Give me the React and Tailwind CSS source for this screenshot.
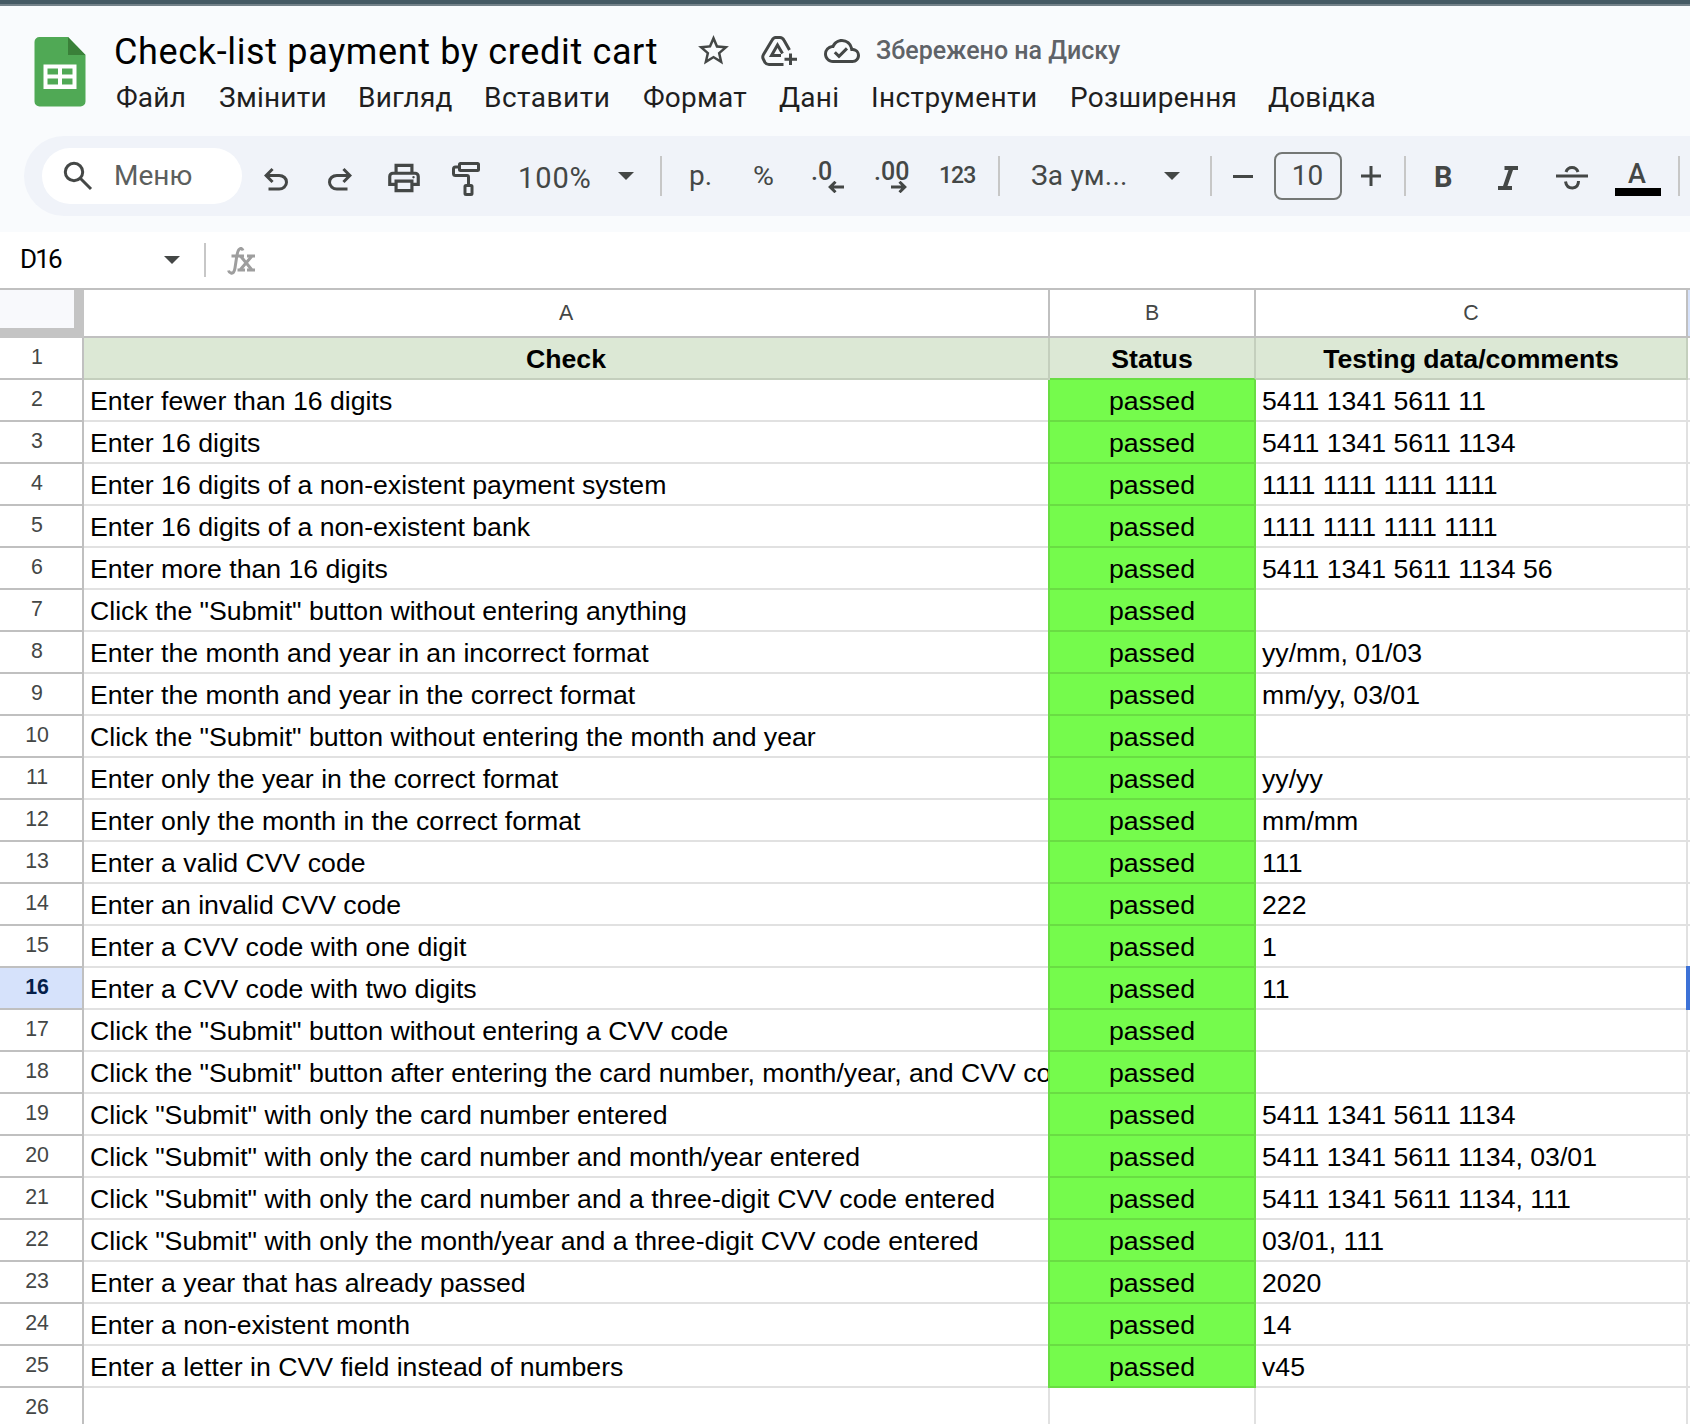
const T = ({ className = "", children }) => (
  <div className={"shrink-0 whitespace-nowrap " + className}>{children}</div>
);

const menus = [
  ["Файл", "w-[103px]"],
  ["Змінити", "w-[139px]"],
  ["Вигляд", "w-[126px]"],
  ["Вставити", "w-[159px] tracking-[0.5px]"],
  ["Формат", "w-[136px]"],
  ["Дані", "w-[92px]"],
  ["Інструменти", "w-[199px] tracking-[0.4px]"],
  ["Розширення", "w-[198px]"],
  ["Довідка", "w-[120px] tracking-[0.1px]"],
];

const rows = [
  ["Enter fewer than 16 digits", "5411 1341 5611 11"],
  ["Enter 16 digits", "5411 1341 5611 1134"],
  ["Enter 16 digits of a non-existent payment system", "1111 1111 1111 1111"],
  ["Enter 16 digits of a non-existent bank", "1111 1111 1111 1111"],
  ["Enter more than 16 digits", "5411 1341 5611 1134 56"],
  ['Click the "Submit" button without entering anything', ""],
  ["Enter the month and year in an incorrect format", "yy/mm, 01/03"],
  ["Enter the month and year in the correct format", "mm/yy, 03/01"],
  ['Click the "Submit" button without entering the month and year', ""],
  ["Enter only the year in the correct format", "yy/yy"],
  ["Enter only the month in the correct format", "mm/mm"],
  ["Enter a valid CVV code", "111"],
  ["Enter an invalid CVV code", "222"],
  ["Enter a CVV code with one digit", "1"],
  ["Enter a CVV code with two digits", "11"],
  ['Click the "Submit" button without entering a CVV code', ""],
  ['Click the "Submit" button after entering the card number, month/year, and CVV code', ""],
  ['Click "Submit" with only the card number entered', "5411 1341 5611 1134"],
  ['Click "Submit" with only the card number and month/year entered', "5411 1341 5611 1134, 03/01"],
  ['Click "Submit" with only the card number and a three-digit CVV code entered', "5411 1341 5611 1134, 111"],
  ['Click "Submit" with only the month/year and a three-digit CVV code entered', "03/01, 111"],
  ["Enter a year that has already passed", "2020"],
  ["Enter a non-existent month", "14"],
  ["Enter a letter in CVV field instead of numbers", "v45"],
];

const Caret = ({ className = "" }) => (
  <svg className={"shrink-0 " + className} width="16" height="8" viewBox="0 0 16 8" fill="#444746"><path d="M0 0h16L8 8z" /></svg>
);
const Divider = ({ className = "" }) => <div className={"h-10 w-0.5 shrink-0 bg-[#c7c7c7] " + className} />;

function Header() {
  return (
    <div className="flex h-[130px]">
      <svg className="mt-[31px] ml-[34px] shrink-0" width="52" height="70" viewBox="0 0 52 70">
        <path d="M5 0h29l17.500 18v46.500a5 5 0 0 1-5 5H5.500a5 5 0 0 1-5-5V5a5 5 0 0 1 5-5z" fill="#50a955" />
        <path d="M34 0l17.500 18H34z" fill="#3a8039" />
        <path fillRule="evenodd" d="M9.500 27.500h33v24.500h-33zM13.500 31.500v6h10.500v-6zM28 31.500v6h10.500v-6zM13.500 41.500v6h10.500v-6zM28 41.500v6h10.500v-6z" fill="#fff" />
      </svg>
      <div className="flex flex-col">
        <div className="flex h-[60px] pt-[21px]">
          <T className="mt-px ml-[28px] w-[581px] font-['Roboto'] text-[36px] leading-[48px] tracking-[0.65px] text-black">Check-list payment by credit cart</T>
          <svg className="mt-[5px] shrink-0" width="37" height="37" viewBox="0 0 24 24" fill="#444746">
            <path d="m22 9.240-7.190-.62L12 2 9.190 8.630 2 9.240l5.460 4.730L5.820 21 12 17.270 18.180 21l-1.630-7.030zM12 15.400l-3.760 2.270 1-4.280-3.320-2.880 4.380-.38L12 6.100l1.710 4.040 4.380.38-3.320 2.880 1 4.280z" />
          </svg>
          <svg className="mt-[9px] ml-[29px] shrink-0" width="36" height="30" viewBox="0 0 36 30" fill="none" stroke="#444746" strokeWidth="3">
            <path d="M28.500 14L23 4.300Q21.500 1.500 19 1.500H14.500Q12.500 1.500 11 4.300L2.500 18.500Q1 21 2.500 23.500L4 26.500Q5.300 28.500 8 28.500H22.500" />
            <path d="M20 19.500H10.500L16.500 9L21.500 17.500" /><path d="M29.500 17.500v11.500M23.500 23.200H36" />
          </svg>
          <svg className="mt-1.5 ml-[27px] shrink-0" width="36" height="36" viewBox="0 0 24 24" fill="#444746">
            <path d="M19.350 10.040A7.490 7.490 0 0 0 12 4C9.110 4 6.600 5.640 5.350 8.040A5.994 5.994 0 0 0 0 14c0 3.310 2.690 6 6 6h13c2.760 0 5-2.240 5-5 0-2.640-2.050-4.780-4.650-4.960zM19 18H6c-2.210 0-4-1.790-4-4 0-2.050 1.530-3.760 3.560-3.970l1.070-.11.500-.95A5.469 5.469 0 0 1 12 6c2.620 0 4.880 1.860 5.390 4.430l.3 1.500 1.530.11A2.980 2.980 0 0 1 22 15c0 1.650-1.350 3-3 3zm-9-3.820-2.090-2.090L6.500 13.500 10 17l6.010-6.010-1.410-1.410z" />
          </svg>
          <T className="ml-4 pt-1 font-['Roboto'] text-[25px] leading-10 font-medium text-[#5f6368]">Збережено на Диску</T>
        </div>
        <div className="ml-[30px] flex font-['Roboto'] text-[28px] leading-[64px] tracking-[0.25px] text-[#1f1f1f]">
          {menus.map(([m, w]) => <T key={m} className={w}>{m}</T>)}
        </div>
      </div>
    </div>
  );
}

const arrowPath = "M280-200v-80h284q63 0 109.500-40T720-420q0-60-46.500-100T564-560H312l104 104-56 56-200-200 200-200 56 56-104 104h252q97 0 169.500 63T800-420q0 94-72.500 157T564-200H280Z";

function Toolbar() {
  return (
    <div className="ml-6 flex h-20 items-center overflow-hidden rounded-l-full bg-[#f0f3f9] font-['Roboto'] text-[28px] leading-10 text-[#444746]">
      <div className="ml-[18px] flex h-14 w-[200px] shrink-0 items-center rounded-full bg-white">
        <svg className="ml-[21px] shrink-0" width="30" height="30" viewBox="0 0 30 30" fill="none" stroke="#444746" strokeWidth="3"><circle cx="11" cy="11" r="8.700" /><path d="M17.500 17.500L28 28" /></svg>
        <T className="ml-[21px] text-[#5c5f5e]">Меню</T>
      </div>
      <svg className="mt-2 ml-4 shrink-0" width="36" height="36" viewBox="0 -960 960 960" fill="#444746"><path d={arrowPath} /></svg>
      <svg className="mt-2 ml-7 shrink-0 -scale-x-100" width="36" height="36" viewBox="0 -960 960 960" fill="#444746"><path d={arrowPath} /></svg>
      <svg className="mt-1 ml-[27px] shrink-0" width="38" height="38" viewBox="0 -960 960 960" fill="#444746"><path d="M640-640v-120H320v120h-80v-200h480v200h-80Zm80 170q13 0 21.500-8.500T750-500q0-13-8.500-21.500T720-530q-13 0-21.500 8.500T690-500q0 13 8.500 21.500T720-470Zm-80 270v-160H320v160h320Zm80 80H240v-160H80v-240q0-51 35-85.500t85-34.500h560q51 0 85.500 34.500T880-520v240H720v160Zm80-240v-160q0-17-11.500-28.500T760-560H200q-17 0-28.500 11.500T160-520v160h80v-80h480v80h80Z" /></svg>
      <svg className="mt-1.5 ml-[29px] shrink-0" width="28" height="34" viewBox="0 0 28 34" fill="none" stroke="#444746" strokeWidth="3"><rect x="7.500" y="1.500" width="19" height="7" rx="1" /><path d="M7.500 5H3.500Q1.500 5 1.500 7V11.500Q1.500 13.500 3.500 13.500H15Q16.500 13.500 16.500 15V23" /><rect x="13" y="23.500" width="7" height="9" rx="1" /></svg>
      <T className="mt-1 ml-[38px] w-[100px] text-[29px] tracking-[0.9px]">100%</T>
      <Caret />
      <Divider className="ml-[26px]" />
      <T className="ml-[27px] w-[64px]">р.</T>
      <T className="w-[58px] pl-px text-[26px]">
        <span className="inline-block scale-x-110">%</span>
      </T>
      <div className="flex h-10 w-[34px] shrink-0 flex-col">
        <T className="mt-0.5 h-[23px] text-[25px] leading-[28px] font-medium">.0</T>
        <svg className="ml-[17px] shrink-0" width="16" height="12" viewBox="0 0 16 12" fill="none" stroke="#444746" strokeWidth="3"><path d="M16 6H2M7.500 .8L2.200 6L7.500 11.200" /></svg>
      </div>
      <div className="ml-[29px] flex h-10 w-[37px] shrink-0 flex-col">
        <T className="mt-0.5 h-[23px] text-[25px] leading-[28px] font-medium">.00</T>
        <svg className="ml-[17px] shrink-0" width="16" height="12" viewBox="0 0 16 12" fill="none" stroke="#444746" strokeWidth="3"><path d="M0 6H14M8.500 .8L13.800 6L8.500 11.200" /></svg>
      </div>
      <T className="ml-[28px] w-[59px] text-[23px] font-medium tracking-[-1px]">123</T>
      <Divider />
      <T className="ml-[31px] w-[133px] tracking-[0.2px]">За ум...</T>
      <Caret />
      <Divider className="ml-[30px]" />
      <div className="ml-[21px] h-[3px] w-5 shrink-0 bg-[#444746]" />
      <div className="ml-[21px] flex h-12 w-[68px] shrink-0 items-center justify-center rounded-lg border-2 border-[#747775] pr-px">10</div>
      <svg className="ml-[19px] shrink-0" width="20" height="20" viewBox="0 0 20 20" stroke="#444746" strokeWidth="3"><path d="M10 0v20M0 10h20" /></svg>
      <Divider className="ml-[23px]" />
      <T className="mt-0.5 ml-[28px] w-[64px] text-[29px] font-bold">B</T>
      <svg className="mt-1 shrink-0" width="20" height="24" viewBox="0 0 20 24" fill="#444746"><path d="M6.500 0H20V4H15L9.500 20H14V24H0V20H5L10.500 4H6.500z" /></svg>
      <svg className="mt-1 ml-[38px] shrink-0" width="32" height="24" viewBox="0 0 32 24" fill="none" stroke="#444746" strokeWidth="3"><path d="M0 10H32" /><path d="M10 6Q11.500 1.500 16 1.500Q20.500 1.500 22 6M9.500 15.500Q10.500 22 16.500 22Q22.500 21.500 22.500 15" /></svg>
      <div className="mt-1 ml-[27px] flex h-9 w-[46px] shrink-0 flex-col items-center">
        <div className="h-7 pr-0.5 text-[27px] leading-[28px] font-medium">A</div>
        <div className="h-2 w-[46px] bg-black" />
      </div>
      <Divider className="ml-[17px]" />
    </div>
  );
}

const Cell = ({ className, children }) => <div className={"h-[42px] shrink-0 overflow-hidden border-r-2 border-b-2 pt-px whitespace-nowrap " + className}>{children}</div>;

function RowNumber({ n, selected }) {
  return (
    <div className={"h-[42px] w-[84px] shrink-0 border-r-2 border-b-2 border-[#c0c0c0] pr-2 text-center text-[21.330px] leading-[38px] " + (selected ? "bg-[#d6e2fb] font-bold text-[#041e49]" : "text-[#444746]")}>{n}</div>
  );
}

function Sheet() {
  return (
    <div className="font-['Liberation_Sans'] text-[26.670px] leading-10 text-black">
      <div className="flex h-12 text-[21.330px] leading-[47px] text-[#444746]">
        <div className="h-12 w-[84px] shrink-0 border-r-[10px] border-b-[10px] border-[#c4c4c4] bg-[#f8f9fc]" />
        <div className="w-[966px] shrink-0 border-r-2 border-b-2 border-[#c0c0c0] text-center">A</div>
        <div className="w-[206px] shrink-0 border-r-2 border-b-2 border-[#c0c0c0] text-center">B</div>
        <div className="w-[432px] shrink-0 border-r-2 border-b-2 border-[#c0c0c0] text-center">C</div>
        <div className="w-0.5 shrink-0 border-b-2 border-[#c0c0c0] bg-[#d6e2fb]" />
      </div>
      <div className="flex text-center font-bold">
        <div className="font-normal"><RowNumber n={1} /></div>
        <Cell className="w-[966px] border-[#c4cfbd] bg-[#dce8d5]">Check</Cell>
        <Cell className="w-[206px] border-r-[#c4cfbd] border-b-[#69dd43] bg-[#dce8d5]">Status</Cell>
        <Cell className="w-[432px] border-[#c4cfbd] bg-[#dce8d5]">Testing data/comments</Cell>
        <div className="w-0.5 border-b-2 border-[#e1e1e1]" />
      </div>
      {rows.map(([check, data], i) => (
        <div key={i} className="flex">
          <RowNumber n={i + 2} selected={i === 14} />
          <Cell className="w-[964px] border-r-0! border-[#e1e1e1] pl-1.5">{check}</Cell>
          <Cell className="w-[208px] border-l-2 border-[#69dd43] bg-[#75fb4c] text-center">passed</Cell>
          <Cell className="w-[432px] border-[#e1e1e1] pl-1.5">{data}</Cell>
          {i === 14
            ? <div className="relative w-0.5"><div className="absolute -top-0.5 -left-0.5 h-11 w-1 bg-[#3d72d7]" /></div>
            : <div className="w-0.5 border-b-2 border-[#e1e1e1]" />}
        </div>
      ))}
      <div className="flex">
        <RowNumber n={26} />
        <Cell className="w-[966px] border-[#e1e1e1]" />
        <Cell className="w-[206px] border-[#e1e1e1]" />
        <Cell className="w-[432px] border-[#e1e1e1]" />
      </div>
    </div>
  );
}

export default function App() {
  return (
    <div className="h-[1424px] w-[1690px] overflow-hidden bg-white">
      <div className="h-1 bg-[#455a64]" />
      <div className="h-0.5 bg-[#74828a]" />
      <div className="h-[226px] bg-[#f9fbfd]">
        <Header />
        <Toolbar />
      </div>
      <div className="flex h-[58px] items-center border-b-2 border-[#c0c0c0]">
        <T className="ml-5 w-[144px] pb-0.5 font-['Roboto'] text-[26px] tracking-[-1.800px] text-black">D16</T>
        <Caret />
        <div className="ml-6 h-[34px] w-0.5 bg-[#c7c7c7]" />
        <svg className="mt-0.5 ml-[21px]" width="28" height="28" viewBox="0 0 28 28" fill="none" stroke="#9e9e9e" strokeWidth="3">
          <path d="M16 3.500Q14.500 0 12 2.500Q10.500 4 9.500 11L8 21Q7 27 4 26Q2 25.500 1.500 23.500M4.500 9H17" />
          <path d="M20 9H28M10.500 23H18M20 23H28M13.500 9L25 23M25 9L13 23" />
        </svg>
      </div>
      <Sheet />
    </div>
  );
}
